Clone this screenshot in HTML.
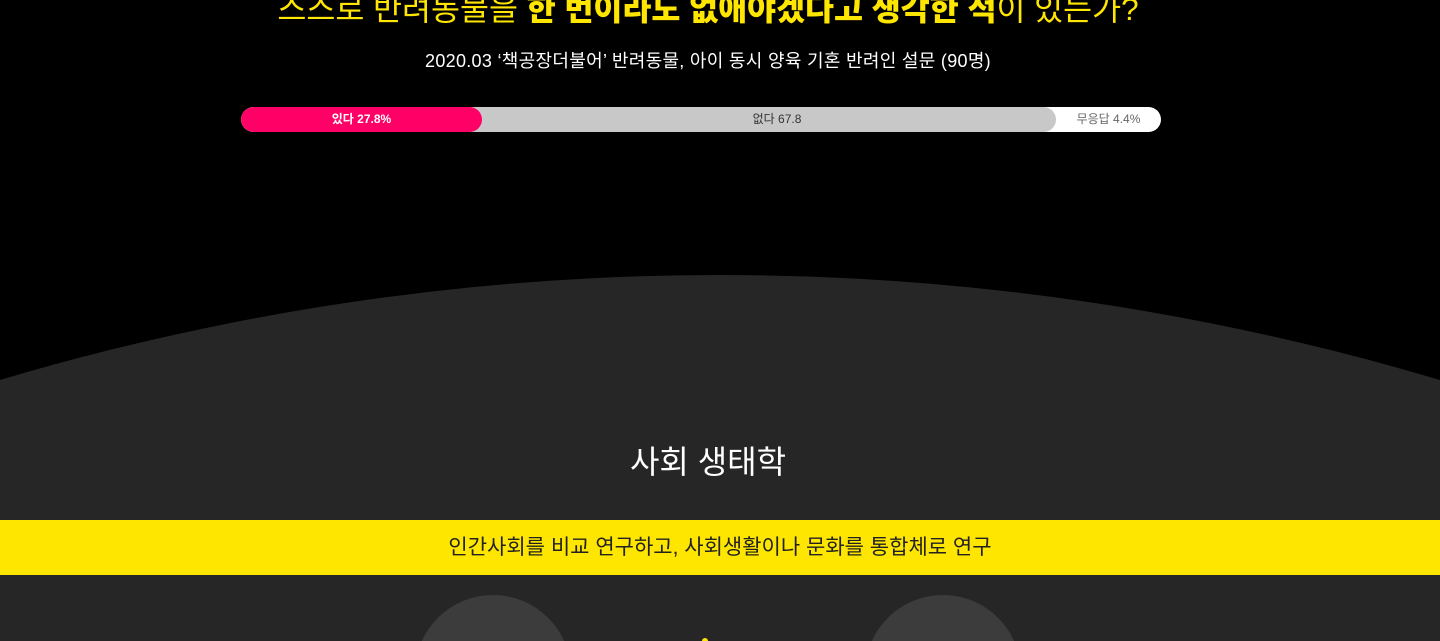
<!DOCTYPE html>
<html style="width:1440px;height:641px;overflow:hidden"><head><meta charset="utf-8"><style>
body{margin:0;width:1440px;height:641px;overflow:hidden;background:#000;font-family:"Liberation Sans","Noto Sans CJK KR",sans-serif;position:relative}
.h{position:absolute;top:-16px;left:-12px;width:1440px;text-align:center;color:#ffe600;font-size:31.5px;white-space:nowrap}
.h b{font-weight:900}
.sub{position:absolute;top:47px;left:-12px;width:1440px;text-align:center;color:#fff;font-size:18px;letter-spacing:0.3px}
.bar{position:absolute;left:241px;top:107px;width:920px;height:25px;border-radius:13px;background:#fff;overflow:hidden;font-size:12px;line-height:25px}
.bar div{position:absolute;top:0;height:25px;text-align:center}
.arc{position:absolute;left:-1801px;top:275px;width:5042px;height:5042px;border-radius:50%;background:#262626}
.t{position:absolute;top:437px;left:-12px;width:1440px;text-align:center;color:#fff;font-size:32px}
.y{position:absolute;top:520px;left:0;width:1440px;height:55px;background:#ffe600;text-align:center;line-height:55px;font-size:21px;color:#222}
.c{position:absolute;top:595px;width:156px;height:156px;border-radius:50%;background:#3c3c3c}
</style></head><body>
<div class="h">스스로 반려동물을 <b>한 번이라도 없애야겠다고 생각한 적</b>이 있는가?</div>
<div class="sub">2020.03 ‘책공장더불어’ 반려동물, 아이 동시 양육 기혼 반려인 설문 (90명)</div>
<div class="bar">
<div style="left:0;width:241px;background:#ff0066;color:#fff;border-radius:13px;z-index:2;font-weight:bold">있다 27.8%</div>
<div style="left:200px;width:615px;background:#c8c8c8;color:#333;border-radius:0 13px 13px 0;padding-left:57px;box-sizing:border-box">없다 67.8</div>
<div style="left:815px;width:105px;color:#666">무응답 4.4%</div>
</div>
<div class="arc"></div>
<div class="t">사회 생태학</div>
<div class="y">인간사회를 비교 연구하고, 사회생활이나 문화를 통합체로 연구</div>
<div class="c" style="left:415px"></div>
<div class="c" style="left:865px"></div>
<div style="position:absolute;left:702px;top:638px;width:6px;height:3px;border-radius:3px 3px 0 0;background:#ffe600"></div>
</body></html>
